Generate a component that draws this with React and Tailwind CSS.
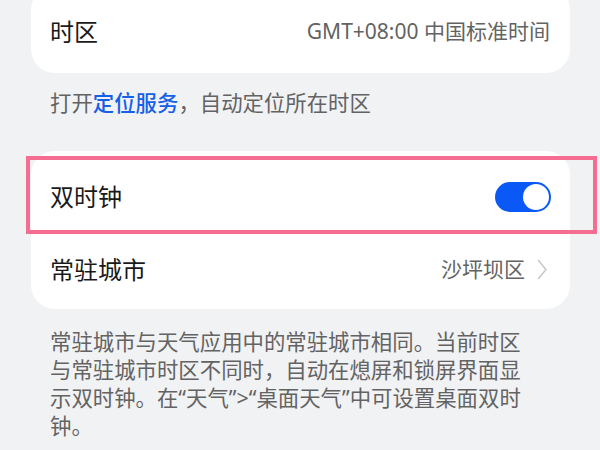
import React, { useState } from 'react';

const font = { fontFamily: '"Noto Sans", "Noto Sans CJK SC", sans-serif' };

function Toggle({ on, onChange }) {
  return (
    <button
      onClick={() => onChange(!on)}
      className={`w-[56px] h-[30px] rounded-full p-[2px] flex items-center ${on ? 'bg-[#0a59f7] justify-end' : 'bg-[#d6d8dc] justify-start'}`}
    >
      <span className="w-[26px] h-[26px] rounded-full bg-white block" />
    </button>
  );
}

function Chevron() {
  return (
    <svg width="11" height="21" viewBox="0 0 11 21" fill="none">
      <path d="M1.5 1.5 L9 10.5 L1.5 19.5" stroke="#c8c9cc" strokeWidth="1.6" strokeLinecap="round" strokeLinejoin="round" />
    </svg>
  );
}

export default function App() {
  const [dual, setDual] = useState(true);

  return (
    <div className="w-[600px] h-[450px] overflow-hidden bg-[#f1f2f4]" style={font}>
      <div className="pl-[31px] pr-[30px]">
        {/* time zone card */}
        <div className="-mt-[14px] bg-white rounded-[24px] pt-[9px] pb-[5px] pl-[19px] pr-[20px]">
          <div className="h-[73px] flex items-center justify-between">
            <span className="text-[24px] text-[#191919]">时区</span>
            <span className="text-[21px] text-[#636363]">GMT+08:00 中国标准时间</span>
          </div>
        </div>

        <p className="pt-[16px] pl-[19px] text-[21.4px] leading-[28px] text-[#636363]">
          打开<span className="text-[#1560e6] font-medium">定位服务</span>，自动定位所在时区
        </p>

        {/* dual clock card */}
        <div className="mt-[34px] bg-white rounded-[24px] pt-[9px] pb-[3px] pl-[19px] pr-[19px]">
          <div className="relative h-[73px] flex items-center justify-between">
            <span className="text-[24px] text-[#191919]">双时钟</span>
            <Toggle on={dual} onChange={setDual} />
            <div className="absolute -left-[24px] -right-[46px] -top-[4px] -bottom-[1px] border-[4px] border-[#f66d92] pointer-events-none" />
          </div>
          <div className="h-[73px] flex items-center justify-between">
            <span className="text-[24px] text-[#191919]">常驻城市</span>
            <span className="flex items-center gap-[12px] pr-[3px]">
              <span className="text-[21px] text-[#636363]">沙坪坝区</span>
              <Chevron />
            </span>
          </div>
        </div>

        <p className="pt-[19px] pl-[19px] w-[500px] text-[21.4px] leading-[28px] text-[#636363]">
          常驻城市与天气应用中的常驻城市相同。当前时区与常驻城市时区不同时，自动在熄屏和锁屏界面显示双时钟。在“天气”&gt;“桌面天气”中可设置桌面双时钟。
        </p>
      </div>
    </div>
  );
}
